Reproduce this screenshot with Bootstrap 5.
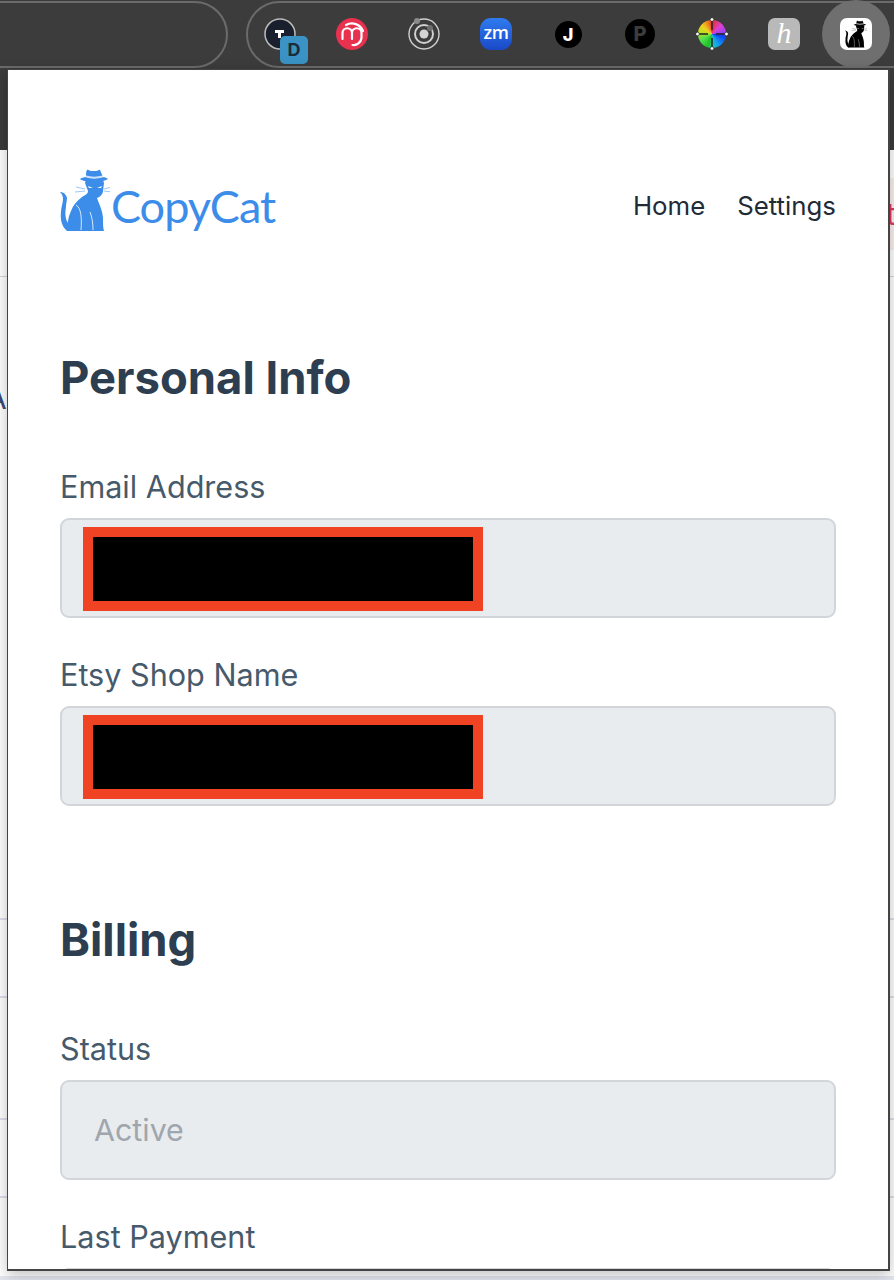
<!DOCTYPE html>
<html lang="en">
<head>
    <meta charset="UTF-8">
    <meta name="viewport" content="width=device-width, initial-scale=1.0">
    <title>CopyCat</title>
    <link href="https://cdn.jsdelivr.net/npm/bootstrap@5.3.0/dist/css/bootstrap.min.css" rel="stylesheet">
    <style>
        body { font-family: Inter, "Liberation Sans", sans-serif; width: 894px; height: 1280px; overflow: hidden; background: #fff; position: relative; }

        /* browser chrome */
        .chrome-bar { height: 150px; background: #3c3c3c; }
        .chrome-row { height: 68px; }
        .pill-left { width: 268px; height: 67px; margin-left: -40px; border: 2px solid #6b6b6b; border-radius: 34px; flex-shrink: 0; }
        .pill-right { height: 67px; margin-left: 18px; flex-grow: 1; margin-right: -40px; border: 2px solid #6b6b6b; border-radius: 34px; }
        .ext-list { margin-left: -4px; }
        .ext-slot { width: 72px; height: 64px; flex-shrink: 0; position: relative; }
        .ext-slot svg { display: block; }
        .ext-active { background: #6f6f6f; width: 68px; height: 68px; border-radius: 50%; margin-left: 2px; }
        .ext-tile { width: 32px; height: 32px; border-radius: 7px; }
        .ext-round { width: 30px; height: 30px; border-radius: 50%; }
        .ext-zm { background: linear-gradient(#2f7bf0, #1a49c8); border-radius: 11px; color: #fff; font: 600 18px/29px "Open Sans", sans-serif; letter-spacing: -.5px; }
        .ext-j { width: 27px; height: 27px; background: #000; color: #fff; font: 800 18px/27px Inter, sans-serif; }
        .ext-p { background: #000; color: #3c3c3c; font: 800 20px/30px Inter, sans-serif; }
        .ext-h { background: #b9b9b9; color: #fff; font: italic 400 30px/30px "Liberation Serif", serif; }
        .ext-cat { background: #fff; }
        .ext-wheel { position: relative; width: 28px; height: 28px; background: conic-gradient(#e03030 0deg, #e040d0 45deg, #a040f0 80deg, #1040f0 100deg, #10a0f0 150deg, #20c0c0 175deg, #20c020 200deg, #50e050 240deg, #c0e020 280deg, #f0d020 310deg, #f08020 340deg, #e03030 360deg); }
        .ext-wheel svg { position: absolute; left: -3px; top: -3px; }
        .ext-badge { position: absolute; left: 36px; top: 34px; width: 28px; height: 28px; border-radius: 5px; background: #3a93c4; color: #1c2b3a; font: 700 18px/28px Inter, sans-serif; text-align: center; }

        /* page behind the popup */
        .behind-row { border-bottom: 2px solid #dde0ea; }
        .behind-first { height: 127px; border-bottom: 1px solid #d6d6d6; }
        .behind-a { height: 643px; }
        .behind-b { height: 78px; }
        .behind-c { height: 122px; }
        .behind-d { height: 78px; }
        .stray-a { position: absolute; left: -14px; top: 376px; font-size: 30px; color: #3b4a7a; }
        .stray-tint { position: absolute; right: 0; top: 178px; width: 6px; height: 72px; background: #fbf0f0; }
        .stray-t { position: absolute; left: 886px; top: 196px; font-size: 30px; color: #e2395c; line-height: 36px; }
        .bottom-strip { position: absolute; left: 0; right: 0; bottom: 0; height: 4px; background: #e4e6f0; }

        /* popup */
        .popup { position: absolute; left: 7px; top: 69px; width: 883px; height: 1202px; background: #fff; border: solid #444; border-width: 1px 2px 2px 1px; box-shadow: 0 4px 14px rgba(0,0,0,.25); overflow: hidden; padding: 0 52px; }
        .popup-nav { padding-top: 98px; height: 278px; }
        .logo-word { font-family: Lato, sans-serif; font-weight: 400; font-size: 45px; line-height: 64px; color: #3c8dea; letter-spacing: -1px; margin: 6px 0 0 1px; }
        .nav-links { padding-top: 20px; gap: 32px; }
        .nav-item-link { color: #212b36; font-size: 25.8px; text-decoration: none; line-height: 36px; }
        .section-title { color: #2c3e50; font-weight: 700; font-size: 45.4px; line-height: 60px; margin: 0; }
        .section-billing { margin-top: 104px; }
        .section-fields { margin-top: 59px; }
        .field-label { color: #475a6b; font-size: 30.6px; line-height: 40px; margin: 0 0 11px; display: block; }
        .field-input.form-control { height: 100px; font-size: 30.4px; padding: 0 32px 0 32px; background: #e9ecef; border: 2px solid #d2d6da; border-radius: 9px; color: #9fa6ad; font-family: inherit; opacity: 1; }
        .field-wrap { position: relative; margin-bottom: 37px; }
        .redact { position: absolute; left: 23px; top: 9px; width: 400px; height: 84px; background: #000; border: 10px solid #f04323; }
    </style>
</head>
<body>
    <svg width="0" height="0" class="position-absolute">
        <symbol id="cat" viewBox="0 0 50 64">
            <path d="M0 24c3 0 6 2 7 6 0 3-1 5-1 9-1 5-1 12 2 16l2 8H7C2 59 0 52 1 44c0-5 2-9 2-13 0-3-1-5-3-7z"/>
            <path d="M25 15l1-3h17l1 3-1 8c0 3-3 6-6 7 2 6 6 13 6 21 0 5 0 9 1 12H8c-1-7 0-14 3-20 2-6 6-10 11-14 3-2 6-3 6-6l-3-8z"/>
            <path d="M26 9c0-3 0-6 1-7 1-1 3 1 4 1h5c2 0 3-2 4-1 1 2 2 5 3 7 2 0 4 1 5 2-3 2-8 3-14 3s-12-1-14-3c1-1 4-2 6-2z"/>
            <path d="M26 7.500c5 1.500 11 1.500 17 0v2c-6 1.500-12 1.500-17 0z" fill="#fff" opacity=".75"/>
            <path d="M28 18l5 2-4 0zM42 18l-5 2 4 0z" fill="#fff"/>
            <path d="M25 21l-9-2M25 23l-10 1M44 21l8-2M44 23l8 1" stroke="currentColor" stroke-width=".5" fill="none"/>
            <path d="M16 37c5 3 6 12 5 25M30 44c2 5 3 11 3 18" stroke="#fff" stroke-width=".8" fill="none"/>
        </symbol>
    </svg>

    <!-- browser toolbar -->
    <div class="chrome-bar">
        <div class="chrome-row d-flex align-items-center">
            <div class="pill-left"></div>
            <div class="pill-right d-flex align-items-center">
                <div class="ext-list d-flex align-items-center">
                    <div class="ext-slot d-flex align-items-center justify-content-center">
                        <svg width="32" height="32" viewBox="0 0 32 32"><circle cx="16" cy="16" r="15" fill="#1a1f2e" stroke="#bbb" stroke-width="1.500"/><path d="M11 12h9v3h-3v5h-3v-5h-3z" fill="#fff"/></svg>
                        <span class="ext-badge">D</span>
                    </div>
                    <div class="ext-slot d-flex align-items-center justify-content-center">
                        <svg width="32" height="32" viewBox="0 0 32 32"><circle cx="16" cy="16" r="16" fill="#e8304f"/><path d="M6.500 21v-6a4.750 4.750 0 0 1 9.500 0v6M16 15a4.750 4.750 0 0 1 9.500 0v5a8 8 0 0 1-9 7M10 7a12 12 0 0 1 17 6" stroke="#fff" stroke-width="2.200" fill="none" stroke-linecap="round"/></svg>
                    </div>
                    <div class="ext-slot d-flex align-items-center justify-content-center">
                        <svg width="34" height="34" viewBox="0 0 34 34"><circle cx="17" cy="17" r="15" fill="none" stroke="#d0d0d0" stroke-width="1.400"/><circle cx="17" cy="17" r="9" fill="none" stroke="#d0d0d0" stroke-width="2"/><circle cx="17" cy="17" r="4.500" fill="#d4d4d4"/><circle cx="10" cy="4" r="3" fill="#8a8a8a"/><circle cx="23" cy="11" r="3" fill="#6e6e6e"/></svg>
                    </div>
                    <div class="ext-slot d-flex align-items-center justify-content-center">
                        <div class="ext-tile ext-zm text-center">zm</div>
                    </div>
                    <div class="ext-slot d-flex align-items-center justify-content-center">
                        <div class="ext-round ext-j text-center">J</div>
                    </div>
                    <div class="ext-slot d-flex align-items-center justify-content-center">
                        <div class="ext-round ext-p text-center">P</div>
                    </div>
                    <div class="ext-slot d-flex align-items-center justify-content-center">
                        <div class="ext-round ext-wheel">
                            <svg width="34" height="34" viewBox="0 0 34 34"><path d="M17 3v10M17 21v10M3 17h10M21 17h10" stroke="#222" stroke-width="1.500"/><circle cx="17" cy="2.500" r="1.800" fill="#fff" stroke="#222" stroke-width=".6"/><circle cx="17" cy="31.500" r="1.800" fill="#fff" stroke="#222" stroke-width=".6"/><circle cx="2.500" cy="17" r="1.800" fill="#fff" stroke="#222" stroke-width=".6"/><circle cx="31.500" cy="17" r="1.800" fill="#fff" stroke="#222" stroke-width=".6"/></svg>
                        </div>
                    </div>
                    <div class="ext-slot d-flex align-items-center justify-content-center">
                        <div class="ext-tile ext-h text-center">h</div>
                    </div>
                    <div class="ext-slot ext-active d-flex align-items-center justify-content-center">
                        <div class="ext-tile ext-cat d-flex align-items-center justify-content-center text-black">
                            <svg width="22" height="28" fill="currentColor"><use href="#cat"/></svg>
                        </div>
                    </div>
                </div>
            </div>
        </div>
    </div>

    <!-- page behind the popup -->
    <div class="behind-first"></div>
    <div class="behind-row behind-a"></div>
    <div class="behind-row behind-b"></div>
    <div class="behind-row behind-c"></div>
    <div class="behind-row behind-d"></div>
    <span class="stray-a">A</span>
    <div class="stray-tint"></div>
    <span class="stray-t">t</span>
    <div class="bottom-strip"></div>

    <!-- extension popup -->
    <div class="popup">
        <div class="popup-nav d-flex justify-content-between align-items-start">
            <a class="d-flex align-items-start text-decoration-none" href="#">
                <svg width="50" height="64" fill="#3c8dea" color="#3c8dea"><use href="#cat"/></svg>
                <span class="logo-word">CopyCat</span>
            </a>
            <div class="nav-links d-flex align-items-center">
                <a class="nav-item-link" href="#">Home</a>
                <a class="nav-item-link" href="#">Settings</a>
            </div>
        </div>

        <h2 class="section-title">Personal Info</h2>
        <div class="section-fields">
            <label class="field-label">Email Address</label>
            <div class="field-wrap"><input class="form-control field-input" disabled><div class="redact"></div></div>
            <label class="field-label">Etsy Shop Name</label>
            <div class="field-wrap"><input class="form-control field-input" disabled><div class="redact"></div></div>
        </div>

        <h2 class="section-title section-billing">Billing</h2>
        <div class="section-fields">
            <label class="field-label">Status</label>
            <div class="field-wrap"><input class="form-control field-input" value="Active" disabled></div>
            <label class="field-label">Last Payment</label>
            <div class="field-wrap"><input class="form-control field-input" disabled></div>
        </div>
    </div>
</body>
</html>
